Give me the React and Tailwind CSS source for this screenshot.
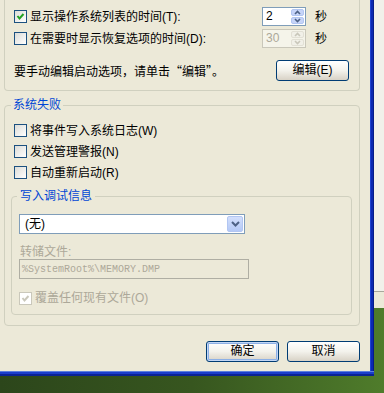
import React from 'react';

const Check = ({ checked, disabled }) => {
  return (
    <span
      className={
        disabled
          ? 'flex items-center justify-center w-[13px] h-[13px] shrink-0 border border-[#CAC8BB] bg-white'
          : 'flex items-center justify-center w-[13px] h-[13px] shrink-0 border border-[#1C5180] bg-linear-to-br from-[#DCDCD7] to-white'
      }
    >
      {checked && (
        <svg width="11" height="11" viewBox="0 0 11 11">
          <path
            d="M2.5 5 L4.5 7.5 L8.5 3"
            fill="none"
            stroke={disabled ? '#CAC8BB' : '#21A121'}
            strokeWidth="2"
          />
        </svg>
      )}
    </span>
  );
};

const Arrow = ({ up, color }) => (
  <svg width="7" height="5" viewBox="0 0 7 5">
    <path
      d={up ? 'M1 4 L3.5 1.5 L6 4' : 'M1 1 L3.5 3.5 L6 1'}
      fill="none"
      stroke={color}
      strokeWidth="1.6"
    />
  </svg>
);

const Spin = ({ value, disabled }) => {
  return (
    <div
      className={
        disabled
          ? 'flex w-[44px] h-[19px] border border-[#C9C7BA] bg-[#F5F4EA]'
          : 'flex w-[44px] h-[19px] border border-[#7F9DB9] bg-white'
      }
    >
      <span
        className={
          disabled
            ? 'flex-1 pl-[3px] leading-[17px] text-[#ACA899]'
            : 'flex-1 pl-[3px] leading-[17px] text-black'
        }
      >
        {value}
      </span>
      <div className="flex flex-col w-[15px] p-px gap-px">
        <div
          className={
            disabled
              ? 'flex-1 flex items-center justify-center rounded-[2px] bg-[#F1F0E8] border border-[#E2E0D5]'
              : 'flex-1 flex items-center justify-center rounded-[2px] bg-[#C6D4F8] border border-[#B2C6F2]'
          }
        >
          <Arrow up color={disabled ? '#C9C7BA' : '#4D6185'} />
        </div>
        <div
          className={
            disabled
              ? 'flex-1 flex items-center justify-center rounded-[2px] bg-[#F1F0E8] border border-[#E2E0D5]'
              : 'flex-1 flex items-center justify-center rounded-[2px] bg-[#C6D4F8] border border-[#B2C6F2]'
          }
        >
          <Arrow color={disabled ? '#C9C7BA' : '#4D6185'} />
        </div>
      </div>
    </div>
  );
};

const XPButton = ({ children, isDefault }) => {
  return (
    <button
      className={
        isDefault
          ? 'w-[73px] h-[21px] rounded-[3px] border border-[#003C74] bg-linear-to-b from-white via-[#F3F2EC] to-[#D8D2C6] shadow-[inset_0_0_0_1px_#C2D6F5,inset_0_0_0_2px_#8DB0E6] text-[12px] leading-[19px] text-black'
          : 'w-[73px] h-[21px] rounded-[3px] border border-[#003C74] bg-linear-to-b from-white via-[#F3F2EC] to-[#D8D2C6] text-[12px] leading-[19px] text-black'
      }
    >
      {children}
    </button>
  );
};

const App = () => {
  return (
    <div className="flex w-[384px] h-[393px] overflow-hidden bg-linear-to-r from-[#2C461B] via-[#37561F] to-[#4F7C2B] font-['Liberation_Sans','Noto_Sans_CJK_SC',sans-serif] text-[12px] text-black">
      <div className="flex flex-col w-[374px]">
        <div className="flex">
          <div className="flex flex-col w-[370px] h-[371px] bg-[#ECE9D8] pl-[4px] pr-[10px]">
            {/* boot options, top cut off */}
            <div className="flex flex-col w-[356px] h-[91px] border-x border-b border-[#D0D0BF] rounded-b-[4px] pt-[7px] pl-[9px] pr-[10px]">
              <div className="flex items-center h-[19px]">
                <div className="flex items-center gap-[3px] w-[248px]">
                  <Check checked />
                  <span>显示操作系统列表的时间(T):</span>
                </div>
                <Spin value="2" />
                <span className="ml-[9px]">秒</span>
              </div>
              <div className="flex items-center h-[19px] mt-[3px]">
                <div className="flex items-center gap-[3px] w-[248px]">
                  <Check />
                  <span>在需要时显示恢复选项的时间(D):</span>
                </div>
                <Spin value="30" disabled />
                <span className="ml-[9px]">秒</span>
              </div>
              <div className="flex items-center justify-between h-[21px] mt-[12px]">
                <span className="font-['Noto_Sans_CJK_SC',sans-serif]">要手动编辑启动选项，请单击“编辑”。</span>
                <XPButton>编辑(E)</XPButton>
              </div>
            </div>

            {/* system failure */}
            <fieldset className="mt-[7px] w-[356px] border border-[#D0D0BF] rounded-[4px] pl-[9px] pt-[8px] pb-[10px]">
              <legend className="-ml-[3px] px-[2px] leading-[14px] text-[#0046D5]">系统失败</legend>
              <div className="flex items-center gap-[3px] h-[21px]">
                <Check />
                <span>将事件写入系统日志(W)</span>
              </div>
              <div className="flex items-center gap-[3px] h-[21px]">
                <Check />
                <span>发送管理警报(N)</span>
              </div>
              <div className="flex items-center gap-[3px] h-[21px]">
                <Check />
                <span>自动重新启动(R)</span>
              </div>

              <fieldset className="mt-[6px] -ml-[3px] w-[341px] border border-[#D0D0BF] rounded-[4px] pl-[7px] pt-[11px] pb-[9px]">
                <legend className="-ml-[2px] px-[3px] leading-[14px] text-[#0046D5]">写入调试信息</legend>
                <div className="flex items-center w-[226px] h-[20px] border border-[#7F9DB9] bg-white">
                  <span className="flex-1 pl-[5px]">(无)</span>
                  <div className="flex items-center justify-center w-[16px] h-[16px] mr-px rounded-[2px] bg-linear-to-b from-[#D3DFFC] to-[#B4C9F6] border border-[#B2C6F2]">
                    <svg width="9" height="6" viewBox="0 0 9 6">
                      <path d="M1 1 L4.5 4.5 L8 1" fill="none" stroke="#4D6185" strokeWidth="2" />
                    </svg>
                  </div>
                </div>
                <div className="mt-[11px] pl-px leading-[14px] text-[#ACA899]">转储文件:</div>
                <div className="flex items-center w-[230px] h-[20px] border border-[#AFAEA3] pl-[2px]">
                  <span className="font-['Liberation_Mono',monospace] text-[10px] text-[#ACA899]">%SystemRoot%\MEMORY.DMP</span>
                </div>
                <div className="flex items-center gap-[3px] h-[14px] mt-[12px]">
                  <Check checked disabled />
                  <span className="text-[#ACA899]">覆盖任何现有文件(O)</span>
                </div>
              </fieldset>
            </fieldset>

            <div className="flex justify-end gap-[8px] mt-[15px]">
              <XPButton isDefault>确定</XPButton>
              <XPButton>取消</XPButton>
            </div>
          </div>
          {/* right window frame */}
          <div className="flex h-[371px]">
            <div className="w-px bg-[#1D42D2]" />
            <div className="w-[2px] bg-[#0A28B2]" />
            <div className="w-px bg-[#071C86]" />
          </div>
        </div>
        {/* bottom window frame */}
        <div className="h-px bg-[#5C80E0]" />
        <div className="h-[2px] bg-[#1A3DCB]" />
        <div className="h-[2px] bg-[#0A2294]" />
      </div>
      {/* window behind, right edge */}
      <div className="flex flex-col w-[10px]">
        <div className="h-[291px] bg-[#F1F0EA]" />
        <div className="h-px bg-[#A8A79C]" />
        <div className="h-[16px] bg-[#ECE9D8]" />
      </div>
    </div>
  );
};

export default App;
